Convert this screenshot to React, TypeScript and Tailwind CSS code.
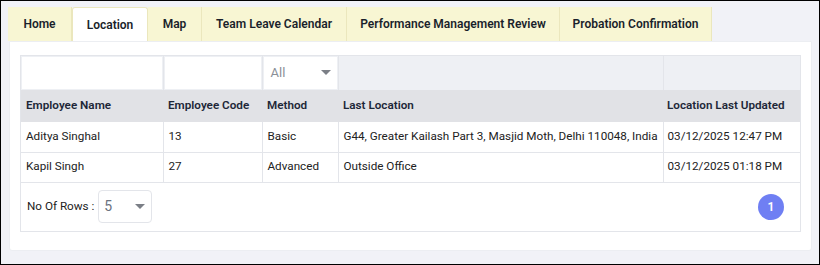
const tabs = [
  { label: "Home", w: "w-[64px]" },
  { label: "Location", w: "w-[76px]", active: true },
  { label: "Map", w: "w-[54px]" },
  { label: "Team Leave Calendar", w: "w-[145px]" },
  { label: "Performance Management Review", w: "w-[213px]" },
  { label: "Probation Confirmation", w: "w-[152px]" },
];

const rows = [
  {
    name: "Aditya Singhal",
    code: "13",
    method: "Basic",
    location: "G44, Greater Kailash Part 3, Masjid Moth, Delhi 110048, India",
    updated: "03/12/2025 12:47 PM",
  },
  {
    name: "Kapil Singh",
    code: "27",
    method: "Advanced",
    location: "Outside Office",
    updated: "03/12/2025 01:18 PM",
  },
];

function Caret() {
  return (
    <svg width="10" height="6" viewBox="0 0 10 6" className="shrink-0">
      <path d="M0 0 L10 0 L5 5 Z" fill="#7b7f86" />
    </svg>
  );
}

export default function App() {
  return (
    <div
      className="w-[820px] h-[265px] border border-black bg-[#f1f2f7] pt-[6px] pl-[7px] pr-[7px] text-[11.7px] text-[#222]"
      style={{ fontFamily: "Roboto, 'Liberation Sans', sans-serif" }}
    >
      <div className="flex h-[34px] text-[12px]">
        {tabs.map((t) => (
          <div
            key={t.label}
            className={`${t.w} flex items-center justify-center font-semibold text-[#1a1f2b] border-r border-[#ebe7bd] ${
              t.active ? "bg-white border-l border-t border-[#e6e7eb] rounded-t-[3px]" : "bg-[#f8f6d3]"
            }`}
          >
            {t.label}
          </div>
        ))}
      </div>

      <div className="ml-[1px] w-[803px] h-[210px] bg-white border border-[#eceef2] rounded-b-[3px] pt-[13px] pl-[10px]">
        <div className="w-[781px] border border-[#e3e5ea]">
          <table className="w-full border-collapse table-fixed">
            <colgroup>
              <col className="w-[142px]" />
              <col className="w-[99px]" />
              <col className="w-[76px]" />
              <col className="w-[325px]" />
              <col />
            </colgroup>
            <thead>
              <tr className="h-[34px] bg-[#eef0f4]">
                <td className="border-r border-[#e3e5ea] p-[1px]">
                  <div className="h-[32px] bg-white" />
                </td>
                <td className="border-r border-[#e3e5ea] p-[1px]">
                  <div className="h-[32px] bg-white" />
                </td>
                <td className="border-r border-[#e3e5ea] p-[1px]">
                  <div className="h-[32px] bg-white flex items-center justify-between pl-[7px] pr-[6px]">
                    <span className="text-[13px] text-[#8a8f97]">All</span>
                    <Caret />
                  </div>
                </td>
                <td className="border-r border-[#e3e5ea]" />
                <td />
              </tr>
              <tr className="h-[32px] bg-[#e1e2e6] text-left text-[#1d2738]">
                <th className="px-[5px] font-semibold">Employee Name</th>
                <th className="px-[5px] font-semibold">Employee Code</th>
                <th className="px-[5px] font-semibold">Method</th>
                <th className="px-[5px] font-semibold">Last Location</th>
                <th className="px-[4px] font-semibold whitespace-nowrap">Location Last Updated</th>
              </tr>
            </thead>
            <tbody>
              {rows.map((r) => (
                <tr key={r.name} className="h-[30px] border-b border-[#e3e5ea] text-[#222]">
                  <td className="px-[5px] border-r border-[#e3e5ea]">{r.name}</td>
                  <td className="px-[5px] border-r border-[#e3e5ea]">{r.code}</td>
                  <td className="px-[5px] border-r border-[#e3e5ea]">{r.method}</td>
                  <td className="px-[5px] border-r border-[#e3e5ea] whitespace-nowrap">{r.location}</td>
                  <td className="px-[4px] whitespace-nowrap">{r.updated}</td>
                </tr>
              ))}
            </tbody>
          </table>
          <div className="h-[48px] flex items-center justify-between pl-[6px] pr-[16px]">
            <div className="flex items-center gap-[4px]">
              <span>No Of Rows :</span>
              <div className="w-[54px] h-[33px] border border-[#e3e5ea] rounded-[4px] flex items-center justify-between pl-[5px] pr-[6px]">
                <span className="text-[14px] text-[#6b7280]">5</span>
                <Caret />
              </div>
            </div>
            <div className="w-[26px] h-[26px] rounded-full bg-[#6f7ff3] text-white text-[12px] font-semibold flex items-center justify-center">
              1
            </div>
          </div>
        </div>
      </div>
    </div>
  );
}
